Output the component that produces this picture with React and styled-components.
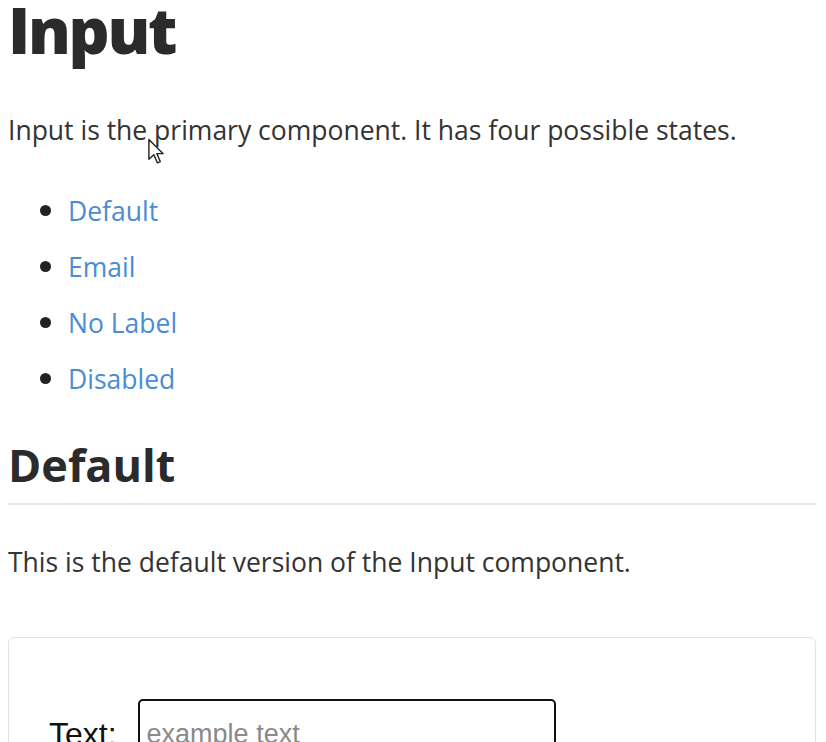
import React from "react";
import styled, { createGlobalStyle } from "styled-components";

const GlobalStyle = createGlobalStyle`
  body {
    margin: 0;
    background: #ffffff;
    font-family: "Open Sans", "Noto Sans", sans-serif;
    color: #333333;
    overflow: hidden;
  }
`;

const Page = styled.div`
  padding: 0 10px 0 8px;
  position: relative;
`;

const Title = styled.h1`
  margin: 0;
  font-size: 64px;
  font-weight: 800;
  line-height: 60px;
  letter-spacing: -2.3px;
  color: #2b2b2b;
`;

const Lead = styled.p`
  margin: 52px 0 0;
  font-size: 26.5px;
  line-height: 36px;
`;

const List = styled.ul`
  margin: 44px 0 0;
  padding-left: 60px;
  list-style: disc;
`;

const Item = styled.li`
  font-size: 26.5px;
  line-height: 36px;
  margin-bottom: 19px;

  &::marker {
    color: #222;
    font-size: 30px;
  }
`;

const Anchor = styled.a`
  color: #4a8cd4;
  text-decoration: none;
`;

const SectionTitle = styled.h2`
  margin: 41px 0 0;
  font-size: 45px;
  font-weight: 700;
  line-height: 54px;
  color: #2b2b2b;
  padding-bottom: 11px;
  border-bottom: 2px solid #e6e6e6;
`;

const Text = styled.p`
  margin: 39px 0 0;
  font-size: 26.5px;
  line-height: 36px;
`;

const Card = styled.div`
  margin-top: 57px;
  border: 1px solid #e2e2e2;
  border-radius: 6px;
  padding: 61px 40px 40px;
  min-height: 200px;
`;

const Field = styled.label`
  display: flex;
  align-items: center;
  gap: 21px;
  font-family: "Liberation Sans", Arial, sans-serif;
  font-size: 32px;
  color: #111;
`;

const Box = styled.input`
  width: 418px;
  height: 70px;
  box-sizing: border-box;
  border: 2px solid #111;
  border-radius: 5px;
  padding: 0 7px;
  font-family: "Liberation Sans", Arial, sans-serif;
  font-size: 27px;
  color: #111;

  &::placeholder {
    color: #8a8a8a;
  }
`;

const Cursor = styled.svg`
  position: absolute;
  left: 147px;
  top: 138px;
  width: 18px;
  height: 27px;
`;

const links = ["Default", "Email", "No Label", "Disabled"];

export default function App() {
  return (
    <>
      <GlobalStyle />
      <Page>
        <Title>Input</Title>
        <Lead>Input is the primary component. It has four possible states.</Lead>
        <List>
          {links.map((l) => (
            <Item key={l}>
              <Anchor href="#">{l}</Anchor>
            </Item>
          ))}
        </List>
        <SectionTitle>Default</SectionTitle>
        <Text>This is the default version of the Input component.</Text>
        <Card>
          <Field>
            Text:
            <Box placeholder="example text" />
          </Field>
        </Card>
        <Cursor viewBox="0 0 12 19">
          <path d="M1 1 L1 15 L4.5 11.8 L7 17.5 L9 16.6 L6.6 11 L11 11 Z" fill="#fff" stroke="#222" strokeWidth="1" strokeLinejoin="round" />
        </Cursor>
      </Page>
    </>
  );
}
